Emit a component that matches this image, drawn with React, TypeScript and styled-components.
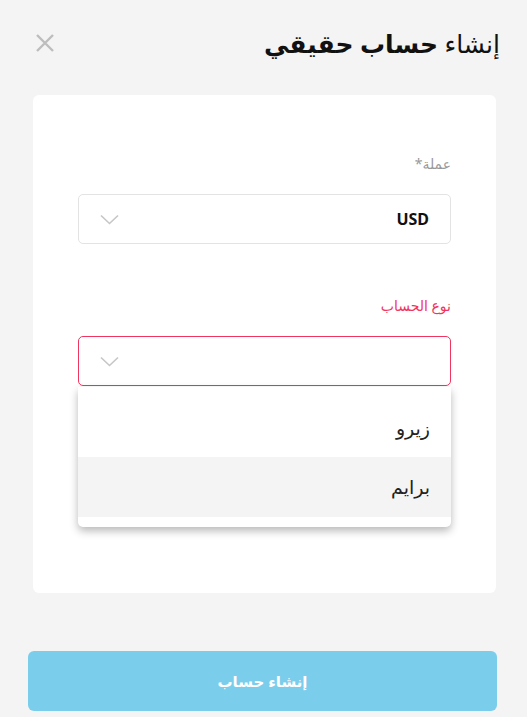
import React from 'react'
import styled, { createGlobalStyle } from 'styled-components'

const GlobalStyle = createGlobalStyle`
  html, body {
    margin: 0;
    padding: 0;
    background: #f4f4f4;
  }
  body {
    font-family: "Noto Sans", "DejaVu Sans", sans-serif;
  }
`

const Page = styled.div`
  direction: rtl;
  width: 527px;
  height: 717px;
  box-sizing: border-box;
  display: flex;
  flex-direction: column;
`

const Header = styled.header`
  display: flex;
  align-items: center;
  justify-content: space-between;
  height: 86px;
  padding: 0 27px 0 34px;
`

const Title = styled.h1`
  margin: 0;
  font-size: 25px;
  font-weight: 400;
  color: #111;
  line-height: 1;
`

const Strong = styled.span`
  font-weight: 700;
`

const CloseButton = styled.button`
  border: 0;
  background: none;
  padding: 0;
  width: 22px;
  height: 22px;
  display: flex;
  align-items: center;
  justify-content: center;
  cursor: pointer;
`

const Card = styled.section`
  margin: 9px 31px 0 33px;
  height: 498px;
  background: #fff;
  border-radius: 6px;
  padding: 58px 45px 0;
  box-sizing: border-box;
  display: flex;
  flex-direction: column;
`

const Field = styled.div`
  display: flex;
  flex-direction: column;
  position: relative;
  margin-bottom: 51px;
`

const Label = styled.label<{ $error?: boolean }>`
  font-size: 14px;
  color: ${({ $error }) => ($error ? '#f0355f' : '#999')};
  line-height: 22px;
  margin-bottom: 19px;
`

const SelectBox = styled.div<{ $error?: boolean }>`
  height: 50px;
  box-sizing: border-box;
  border: 1px solid ${({ $error }) => ($error ? '#f0355f' : '#e3e3e3')};
  border-radius: 5px;
  display: flex;
  align-items: center;
  justify-content: space-between;
  padding: 0 21px 0 21px;
  background: #fff;
`

const Value = styled.span`
  font-size: 16px;
  font-weight: 700;
  color: #111;
`

const Menu = styled.ul`
  position: absolute;
  top: 100%;
  left: 0;
  right: 0;
  margin: 1px 0 0;
  padding: 0 0 10px;
  list-style: none;
  background: #fff;
  border-radius: 0 0 5px 5px;
  box-shadow: 0 4px 8px rgba(0, 0, 0, 0.28);
  z-index: 2;
`

const Option = styled.li<{ $active?: boolean }>`
  height: ${({ $active }) => ($active ? '60px' : '70px')};
  display: flex;
  align-items: center;
  padding: ${({ $active }) => ($active ? '0' : '12px 0 0')};
  padding-right: 21px;
  box-sizing: border-box;
  font-size: 19px;
  color: #222;
  background: ${({ $active }) => ($active ? '#f4f4f4' : '#fff')};
`

const Footer = styled.div`
  margin-top: auto;
  padding: 0 30px 6px 28px;
`

const SubmitButton = styled.button`
  width: 100%;
  height: 60px;
  border: 0;
  border-radius: 6px;
  background: #7bcdec;
  color: #fff;
  font-family: inherit;
  font-size: 15px;
  font-weight: 700;
`

function Chevron() {
  return (
    <svg width="19" height="11" viewBox="0 0 19 11" fill="none">
      <path d="M1 1.5 L9.5 9.5 L18 1.5" stroke="#c6c6c6" strokeWidth="1.6" />
    </svg>
  )
}

function CloseIcon() {
  return (
    <svg width="20" height="20" viewBox="0 0 20 20" fill="none">
      <path d="M2 2 L18 18 M18 2 L2 18" stroke="#bdbdbd" strokeWidth="2.4" />
    </svg>
  )
}

export default function App() {
  return (
    <>
      <GlobalStyle />
      <Page>
        <Header>
          <Title>
            إنشاء <Strong>حساب حقيقي</Strong>
          </Title>
          <CloseButton aria-label="close">
            <CloseIcon />
          </CloseButton>
        </Header>
        <Card>
          <Field>
            <Label>عملة*</Label>
            <SelectBox>
              <Value>USD</Value>
              <Chevron />
            </SelectBox>
          </Field>
          <Field>
            <Label $error>نوع الحساب</Label>
            <SelectBox $error>
              <span />
              <Chevron />
            </SelectBox>
            <Menu>
              <Option>زيرو</Option>
              <Option $active>برايم</Option>
            </Menu>
          </Field>
        </Card>
        <Footer>
          <SubmitButton>إنشاء حساب</SubmitButton>
        </Footer>
      </Page>
    </>
  )
}
